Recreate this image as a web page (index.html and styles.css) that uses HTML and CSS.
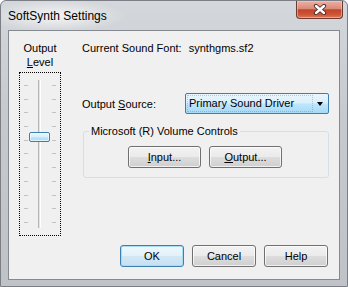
FILE: index.html
```html
<!DOCTYPE html>
<html lang="en">
<head>
    <meta charset="UTF-8">
    <title>SoftSynth Settings</title>
    <link rel="stylesheet" href="styles.css">
</head>
<body>
    <div class="window">
        <div class="titlebar">
            <span class="title">SoftSynth Settings</span>
            <button class="close" aria-label="Close">
                <svg width="14" height="11" viewBox="0 0 14 11">
                    <path d="M3 2 L11 9 M11 2 L3 9" stroke="#4a2a26" stroke-width="4.2" stroke-linecap="round"/>
                    <path d="M3 2 L11 9 M11 2 L3 9" stroke="#ffffff" stroke-width="2.4" stroke-linecap="round"/>
                </svg>
            </button>
        </div>
        <div class="client">
            <div class="main">
                <div class="level">
                    <div class="level-label">Output<br><u>L</u>evel</div>
                    <div class="slider">
                        <div class="ticks">
                            <i></i><i></i><i></i><i></i><i></i><i></i><i></i><i></i><i></i><i></i><i></i>
                        </div>
                        <div class="track"></div>
                        <div class="ticks">
                            <i></i><i></i><i></i><i></i><i></i><i></i><i></i><i></i><i></i><i></i><i></i>
                        </div>
                        <div class="thumb"></div>
                    </div>
                </div>
                <div class="settings">
                    <div class="font-row">
                        <span>Current Sound Font:</span>
                        <span class="font-name">synthgms.sf2</span>
                    </div>
                    <div class="source-row">
                        <span class="source-label">Output <u>S</u>ource:</span>
                        <div class="combo">
                            <span class="combo-text">Primary Sound Driver</span>
                            <span class="combo-arrow"></span>
                        </div>
                    </div>
                    <fieldset class="group">
                        <legend>Microsoft (R) Volume Controls</legend>
                        <div class="group-buttons">
                            <button class="btn wide"><u>I</u>nput...</button>
                            <button class="btn wide"><u>O</u>utput...</button>
                        </div>
                    </fieldset>
                </div>
            </div>
            <div class="actions">
                <button class="btn default">OK</button>
                <button class="btn">Cancel</button>
                <button class="btn">Help</button>
            </div>
        </div>
    </div>
</body>
</html>
```

FILE: styles.css
```css
* {
    box-sizing: border-box;
}

body {
    margin: 0;
    background-color: #ffffff;
    font-family: "Liberation Sans", Arial, sans-serif;
    font-size: 11px;
    color: #000000;
}

.window {
    width: 348px;
    height: 287px;
    border: 1px solid #7b7f85;
    border-radius: 6px 6px 0 0;
    background: linear-gradient(to bottom, #d4d7db 0%, #c6c9cd 40%, #bfc3c8 100%);
    display: flex;
    flex-direction: column;
}

.titlebar {
    height: 29px;
    display: flex;
    align-items: flex-start;
    justify-content: space-between;
    padding-left: 7px;
    padding-right: 4px;
    background: radial-gradient(ellipse 70px 16px at 55px 15px, rgba(255, 255, 255, 0.75), rgba(255, 255, 255, 0) 100%);
}

.title {
    font-size: 12px;
    line-height: 14px;
    margin-top: 8px;
    color: #000000;
}

.close {
    width: 47px;
    height: 18px;
    padding: 0;
    border: 1px solid #6b3a32;
    border-top: none;
    border-radius: 0 0 4px 4px;
    background: linear-gradient(to bottom, #e9b1a4 0%, #dc8a77 45%, #c2432a 52%, #cd5636 80%, #dc7a58 100%);
    display: flex;
    align-items: center;
    justify-content: center;
    box-shadow: inset 0 0 0 1px rgba(255, 210, 200, 0.5);
}

.client {
    flex: 1;
    margin: 0 7px 6px 7px;
    border: 1px solid #858a90;
    background-color: #f0f0f0;
    display: flex;
    flex-direction: column;
}

.main {
    display: flex;
    padding-top: 10px;
    line-height: 14px;
}

.level {
    width: 42px;
    margin-left: 10px;
    display: flex;
    flex-direction: column;
    align-items: center;
}

.level-label {
    text-align: center;
    white-space: nowrap;
}

.slider {
    position: relative;
    width: 42px;
    height: 164px;
    margin-top: 3px;
    border: 1px dotted #000000;
    display: flex;
    padding: 0 4px;
}

.ticks {
    width: 4px;
    height: 138px;
    margin-top: 12px;
    display: flex;
    flex-direction: column;
    justify-content: space-between;
}

.ticks i {
    display: block;
    height: 1px;
    background-color: #c2c2c2;
}

.track {
    width: 3px;
    height: 148px;
    margin: 7px 11px 0 10px;
    border-left: 1px solid #b5b5b5;
    border-right: 1px solid #ffffff;
    background-color: #e4e4e4;
}

.thumb {
    position: absolute;
    left: 9px;
    top: 59px;
    width: 21px;
    height: 10px;
    border: 1px solid #3c7fb1;
    border-radius: 2px;
    background: linear-gradient(to bottom, #eaf6fd 0%, #d9f0fc 45%, #bee6fd 55%, #a7d9f5 100%);
    box-shadow: inset 0 0 0 1px rgba(255, 255, 255, 0.6);
}

.settings {
    margin-left: 21px;
    width: 247px;
}

.font-row {
    white-space: nowrap;
}

.font-name {
    margin-left: 4px;
}

.source-row {
    display: flex;
    align-items: center;
    margin-top: 38px;
}

.source-label {
    width: 103px;
}

.combo {
    width: 144px;
    height: 21px;
    border: 1px solid #3c7fb1;
    border-radius: 2px;
    background: linear-gradient(to bottom, #eaf6fd 0%, #d9f0fc 48%, #bee6fd 52%, #a7d9f5 100%);
    display: flex;
    align-items: center;
    justify-content: space-between;
    padding: 0 5px 0 2px;
}

.combo-text {
    line-height: 15px;
    width: 124px;
    padding-left: 1px;
    outline: 1px dotted rgba(60, 100, 140, 0.3);
}

.combo-arrow {
    width: 0;
    height: 0;
    border-left: 3.5px solid transparent;
    border-right: 3.5px solid transparent;
    border-top: 4px solid #000000;
}

.group {
    margin: 10px 0 0 1px;
    padding: 0 0 9px 5px;
    border: 1px solid #d5dfe5;
    border-radius: 3px;
}

.group legend {
    padding: 0 2px;
    line-height: 14px;
}

.group-buttons {
    display: flex;
    gap: 8px;
    margin-top: 8px;
    padding-left: 39px;
}

.btn {
    width: 64px;
    height: 22px;
    padding: 0;
    font-family: "Liberation Sans", Arial, sans-serif;
    font-size: 11px;
    color: #000000;
    border: 1px solid #707070;
    border-radius: 3px;
    background: linear-gradient(to bottom, #f2f2f2 0%, #ebebeb 48%, #dddddd 52%, #cfcfcf 100%);
    box-shadow: inset 0 0 0 1px rgba(255, 255, 255, 0.7);
}

.btn.wide {
    width: 73px;
}

.btn.default {
    border-color: #3c7fb1;
    box-shadow: inset 0 0 0 1px #a8dcf5;
    background: linear-gradient(to bottom, #eef7fc 0%, #e4f1f9 48%, #d2e8f5 52%, #c4e0f1 100%);
}

.actions {
    margin-top: auto;
    display: flex;
    justify-content: flex-end;
    gap: 8px;
    padding: 0 11px 12px 0;
}
```
